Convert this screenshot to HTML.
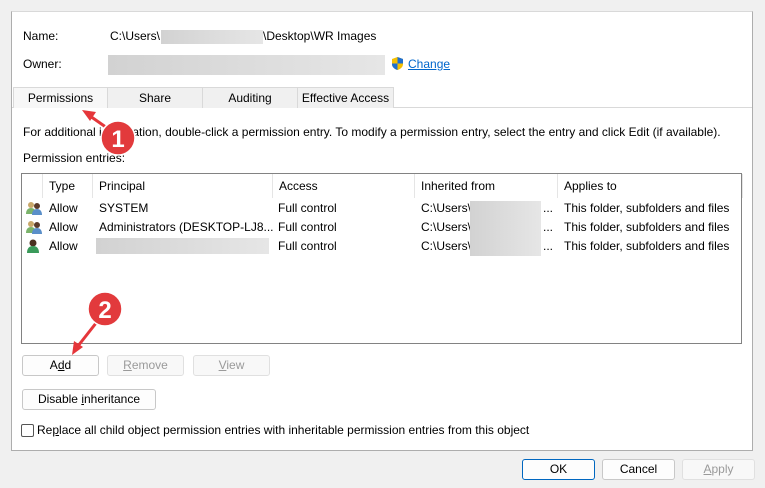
<!DOCTYPE html>
<html><head><style>
body{margin:0;width:765px;height:488px;background:#f0f0f0;font-family:"Liberation Sans",sans-serif;font-size:12px;color:#000;position:relative;overflow:hidden}
.a{position:absolute;white-space:nowrap}
.panel{position:absolute;left:11px;top:11px;width:740px;height:438px;background:#fff;border:1px solid #adadad;border-top:1px solid #d9d9d9}
.blur{position:absolute;background:linear-gradient(90deg,#d2d2d2,#dcdcdc,#e6e6e6)}
.tab{position:absolute;top:87px;height:20px;border:1px solid #d9d9d9;border-bottom:none;background:#f0f0f0;text-align:center;line-height:20px}
.btn{position:absolute;height:19px;border:1px solid #c8c8c8;border-radius:3px;background:#fdfdfd;text-align:center;line-height:19px}
.dis{color:#9a9a9a;border-color:#e0e0e0;background:#f8f8f8}
.th{position:absolute;top:174px;height:24px;line-height:24px;border-left:1px solid #e5e5e5;padding-left:6px}
</style></head><body>
<div class="panel"></div>
<div class="a" style="left:23px;top:29px">Name:</div>
<div class="a" style="left:110px;top:29px">C:\Users\</div>
<div class="blur" style="left:161px;top:30px;width:102px;height:14px"></div>
<div class="a" style="left:263px;top:29px">\Desktop\WR Images</div>
<div class="a" style="left:23px;top:57px">Owner:</div>
<div class="blur" style="left:108px;top:55px;width:277px;height:20px"></div>
<svg class="a" style="left:390px;top:56px" width="15" height="15" viewBox="0 0 15 15"><path d="M7.5 1L13 3v5c0 3-2.5 5-5.5 6C4.5 13 2 11 2 8V3z" fill="#f5c000"/><path d="M7.5 1L13 3v4.5H7.5zM2 7.5h5.5V14C4.5 13 2 11 2 8z" fill="#1e6fd0"/></svg>
<div class="a" style="left:408px;top:57px;color:#0066cc;text-decoration:underline">Change</div>
<div class="a" style="left:12px;top:107px;width:740px;height:1px;background:#d9d9d9"></div>
<div class="tab" style="left:13px;width:93px;background:#f7f7f7">Permissions</div>
<div class="tab" style="left:107px;width:94px">Share</div>
<div class="tab" style="left:202px;width:94px">Auditing</div>
<div class="tab" style="left:297px;width:95px">Effective Access</div>
<div class="a" style="left:23px;top:125px">For additional information, double-click a permission entry. To modify a permission entry, select the entry and click Edit (if available).</div>
<div class="a" style="left:23px;top:151px">Permission entries:</div>
<div class="a" style="left:21px;top:173px;width:719px;height:169px;border:1px solid #828282;background:#fff"></div>
<div class="th" style="left:42px">Type</div>
<div class="th" style="left:92px">Principal</div>
<div class="th" style="left:272px">Access</div>
<div class="th" style="left:414px">Inherited from</div>
<div class="th" style="left:557px;width:178px;border-right:1px solid #e5e5e5">Applies to</div>
<!-- rows -->
<svg class="a" style="left:25px;top:200px" width="18" height="16"><circle cx="6" cy="5" r="3" fill="#c9a86a"/><path d="M1 14c0-4 2-6 5-6s5 2 5 6z" fill="#7bb36b"/><circle cx="12" cy="6" r="3" fill="#5a3a2a"/><path d="M7 15c0-4 2-6 5-6s5 2 5 6z" fill="#5a8fc9"/></svg>
<svg class="a" style="left:25px;top:219px" width="18" height="16"><circle cx="6" cy="5" r="3" fill="#c9a86a"/><path d="M1 14c0-4 2-6 5-6s5 2 5 6z" fill="#7bb36b"/><circle cx="12" cy="6" r="3" fill="#5a3a2a"/><path d="M7 15c0-4 2-6 5-6s5 2 5 6z" fill="#5a8fc9"/></svg>
<svg class="a" style="left:26px;top:238px" width="14" height="16"><circle cx="7" cy="5" r="3.5" fill="#4a3020"/><path d="M1 15c0-5 2.5-7 6-7s6 2 6 7z" fill="#3a9a5a"/></svg>
<div class="a" style="left:49px;top:201px">Allow</div><div class="a" style="left:99px;top:201px">SYSTEM</div><div class="a" style="left:278px;top:201px">Full control</div>
<div class="a" style="left:49px;top:220px">Allow</div><div class="a" style="left:99px;top:220px">Administrators (DESKTOP-LJ8...</div><div class="a" style="left:278px;top:220px">Full control</div>
<div class="a" style="left:49px;top:239px">Allow</div><div class="blur" style="left:96px;top:238px;width:173px;height:16px"></div><div class="a" style="left:278px;top:239px">Full control</div>
<div class="a" style="left:421px;top:201px">C:\Users\</div><div class="a" style="left:421px;top:220px">C:\Users\</div><div class="a" style="left:421px;top:239px">C:\Users\</div>
<div class="blur" style="left:470px;top:201px;width:71px;height:55px"></div>
<div class="a" style="left:543px;top:201px">...</div><div class="a" style="left:543px;top:220px">...</div><div class="a" style="left:543px;top:239px">...</div>
<div class="a" style="left:564px;top:201px">This folder, subfolders and files</div>
<div class="a" style="left:564px;top:220px">This folder, subfolders and files</div>
<div class="a" style="left:564px;top:239px">This folder, subfolders and files</div>
<div class="btn" style="left:22px;top:355px;width:75px">A<u>d</u>d</div>
<div class="btn dis" style="left:107px;top:355px;width:75px"><u>R</u>emove</div>
<div class="btn dis" style="left:193px;top:355px;width:75px"><u>V</u>iew</div>
<div class="btn" style="left:22px;top:389px;width:132px">Disable <u>i</u>nheritance</div>
<div class="a" style="left:21px;top:424px;width:11px;height:11px;border:1px solid #555;border-radius:2px;background:#fff"></div>
<div class="a" style="left:37px;top:423px">Re<u>p</u>lace all child object permission entries with inheritable permission entries from this object</div>
<div class="btn" style="left:522px;top:459px;width:71px;border-color:#0067c0">OK</div>
<div class="btn" style="left:602px;top:459px;width:71px">Cancel</div>
<div class="btn dis" style="left:682px;top:459px;width:71px"><u>A</u>pply</div>
<svg class="a" style="left:0;top:0" width="765" height="488">
<g fill="#e5363a" stroke="#e5363a">
<line x1="110" y1="130" x2="90" y2="116" stroke-width="3"/><path d="M82 110l14 2-6 9z" stroke="none"/>
<line x1="100" y1="318" x2="78" y2="346" stroke-width="3"/><path d="M72 355l2-14 9 6z" stroke="none"/>
</g>
<circle cx="118" cy="138" r="17" fill="#e23a3c" stroke="#fff" stroke-width="1.5"/>
<circle cx="105" cy="309" r="17" fill="#e23a3c" stroke="#fff" stroke-width="1.5"/>
<text x="118" y="147" fill="#fff" font-family="Liberation Sans" font-weight="bold" font-size="24" text-anchor="middle">1</text>
<text x="105" y="318" fill="#fff" font-family="Liberation Sans" font-weight="bold" font-size="24" text-anchor="middle">2</text>
</svg>
</body></html>
